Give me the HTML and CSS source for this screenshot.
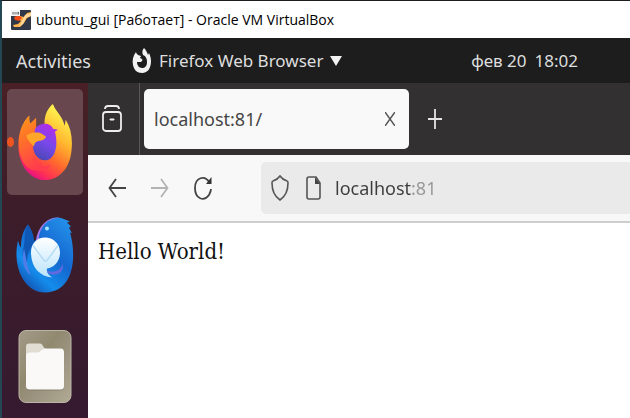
FILE: index.html
```
<!DOCTYPE html>
<html lang="en">
<head>
<meta charset="utf-8">
<title>ubuntu_gui [Работает] - Oracle VM VirtualBox</title>
<link rel="stylesheet" href="styles.css">
</head>
<body>
<header class="titlebar">
  <svg class="vm-icon" viewBox="0 0 20 20" aria-hidden="true">
    <rect width="20" height="20" rx="1" fill="#303747"/>
    <path d="M2 15l5-1 3-3-3-2 2-3 4 1 3-4 4-1v4l-4 2-3 5-4 4H3z" fill="#ffb44b"/>
    <path d="M3 7l5-2 3 3-3 3-4-1z" fill="#f04c18"/>
    <path d="M14 5l6-2v3l-5 2-3 6-4 3 3-6z" fill="#ffd79a"/>
    <rect x="0" y="0" width="9" height="6" fill="#f4f4f4"/>
    <path d="M2 2v2.500M4 2v2.500M6 2v2.500M7.500 2v2.500" stroke="#444" stroke-width=".8"/>
  </svg>
  <h1 class="title">ubuntu_gui [Работает] - Oracle VM VirtualBox</h1>
</header>
<div class="topbar">
  <button class="activities">Activities</button>
  <button class="app-menu">
    <svg class="app-icon" viewBox="0 0 20 26" aria-hidden="true">
      <path d="M4 4C1 8 0 12 1 17c1 5 4 8 9 8 6 0 9-5 9-12 0-3-1-6-2-8l-1 2c-1-3-2-5-4-7-2 2-2 5-1 7 3 1 4 4 4 7 0 4-2 6-5 6s-5-3-5-6h4c1-1 2-2 1-3L8 10l1-2-3-1C5 6 4 5 4 4z" fill="#f2f2f2"/>
    </svg>
    <span>Firefox Web Browser</span>
    <svg class="caret" viewBox="0 0 12 10" aria-hidden="true"><path d="M0 0h12L6 10z" fill="#f2f2f2"/></svg>
  </button>
  <time class="clock"><span>фев 20</span><span>18:02</span></time>
</div>
<div class="desktop">
  <nav class="dock" aria-label="Dock">
    <button class="dock-item active" aria-label="Firefox">
      <svg class="dock-icon" viewBox="0 0 54 78" aria-hidden="true">
        <defs>
          <linearGradient id="fire" x1=".8" y1="0" x2=".3" y2="1"><stop offset=".1" stop-color="#fff04d"/><stop offset=".4" stop-color="#ffb52e"/><stop offset=".65" stop-color="#ff6b2d"/><stop offset=".85" stop-color="#ff3350"/><stop offset="1" stop-color="#e50c8b"/></linearGradient>
          <linearGradient id="globe" x1=".7" y1="0" x2=".3" y2="1"><stop stop-color="#b52be6"/><stop offset=".5" stop-color="#7948eb"/><stop offset="1" stop-color="#4a47b5"/></linearGradient>
          <linearGradient id="head" x1="0" y1="0" x2=".4" y2="1"><stop stop-color="#ff9a16"/><stop offset=".5" stop-color="#ff6a2e"/><stop offset="1" stop-color="#ff3d4c"/></linearGradient>
        </defs>
        <path d="M27 26C25 13 29 5 35 0c3 8 9 11 12 22l1-6c5 8 7 18 6 29C53 64 42 77 27 77 12 77 0 62 0 42c0-13 4-23 11-30 0 4 0 6 1 8l6-5-1 9z" fill="url(#fire)"/>
        <path d="M11 12c0 4 0 6 1 8l6-6v12l9 5-9 6-3 20c4 6 12 8 18 4-2 5-8 8-14 6C7 69-1 52 1 34 3 24 6 16 11 12z" fill="url(#head)"/>
        <path d="M17 25C22 18 33 19 35 25l5 1-3 2c4 14 0 29-10 29-8 0-13-8-12-17z" fill="url(#globe)"/>
        <path d="M8 32c5-4 11-3 14-3l6 4c-1 4-5 4-9 5-2 1-3 2-3 5-4-3-7-7-8-11z" fill="#ffa62a"/>
      </svg>
    </button>
    <button class="dock-item" aria-label="Thunderbird">
      <svg class="dock-icon wide" viewBox="0 0 58 76" aria-hidden="true">
        <defs>
          <linearGradient id="bird" x1="1" y1="0" x2=".3" y2="1"><stop stop-color="#2798ef"/><stop offset=".5" stop-color="#1467cf"/><stop offset=".8" stop-color="#148ceb"/><stop offset="1" stop-color="#1357b7"/></linearGradient>
          <linearGradient id="mail" x2="0" y2="1"><stop stop-color="#fff"/><stop offset="1" stop-color="#b9e3fb"/></linearGradient>
        </defs>
        <path d="M2 24c1 3 1 5 3 7C5 21 7 14 12 8c3 5 5 9 6 17l2-2C25 4 38-3 49 3l5 2-3 1 4 4-2 1 3 6-2-1c7 24 4 60-25 60C8 76-4 50 2 24z" fill="url(#bird)"/>
        <path d="M12 8C7 17 10 24 7 33c-1 8 1 14 4 20-1-17 3-18 7-28 0-7-3-12-6-17z" fill="#1058b5"/>
        <path d="M20 24C22 9 32 0 44 1c-8 1-13 3-17 9-3 5-4 7-4 12z" fill="#a878ea"/>
        <path d="M29 53c8 5 16 1 18-6 1 10-7 13-14 10z" fill="#6269df"/>
        <path d="M8 32c-3 13 0 22 7 27-4-9-5-18-7-27z" fill="#4f7ee8"/>
        <path d="M15 36c0-9 6-15 14-15s15 6 15 15-6 15-13 16c-1 4 2 7 5 9-12-1-21-10-21-25z" fill="url(#mail)"/>
        <path d="M17 29l11 15c1 1 2 1 3 0l11-15" fill="none" stroke="#b4dcf6" stroke-width="1.500"/>
        <circle cx="31" cy="12" r="2" fill="#a8e5ff"/>
      </svg>
    </button>
    <button class="dock-item" aria-label="Files">
      <svg class="dock-icon" viewBox="0 0 54 74" aria-hidden="true">
        <defs><linearGradient id="case" x2="1" y2="1"><stop stop-color="#a39b88"/><stop offset=".4" stop-color="#91896f"/><stop offset=".6" stop-color="#9b937f"/><stop offset="1" stop-color="#b0a993"/></linearGradient></defs>
        <rect x="1" y="1" width="52" height="72" rx="7" fill="url(#case)" stroke="#bbb5a5"/>
        <path d="M8 17c0-2 1-3 3-3h11c3 0 3 5 6 5v12H8z" fill="#e1ddd2"/>
        <path d="M8 28c0-3 1-4 4-4h7c4 0 4-5 8-5h15c3 0 4 1 4 4v34c0 3-1 4-4 4H12c-3 0-4-1-4-4z" fill="#6f6958" opacity=".5"/>
        <path d="M8 27c0-3 1-4 4-4h7c4 0 4-4 8-4h15c3 0 4 1 4 4v33c0 3-1 4-4 4H12c-3 0-4-1-4-4z" fill="#faf9f7"/>
      </svg>
    </button>
  </nav>
  <main class="browser">
    <div class="tabstrip">
      <button class="recent" aria-label="Recent browsing">
        <svg viewBox="0 0 20 28" class="recent-icon" aria-hidden="true"><g fill="none" stroke="#ededed" stroke-width="1.800"><path d="M3 4q0-3 3-3h8q3 0 3 3"/><rect x="1" y="7" width="18" height="19" rx="3"/><path d="M8 14h4v1H8z" fill="#ededed" stroke-width="1"/></g></svg>
      </button>
      <div class="tab">
        <span class="tab-name">localhost:81/</span>
        <button class="close" aria-label="Close tab"><svg class="close-icon" viewBox="0 0 10 14" aria-hidden="true"><path d="M0 0l10 14M10 0L0 14" stroke="#555" stroke-width="1.500"/></svg></button>
      </div>
      <button class="new-tab" aria-label="New tab"><svg class="plus-icon" viewBox="0 0 14 20" aria-hidden="true"><path d="M7 0v20M0 10h14" stroke="#e4e4e4" stroke-width="1.800"/></svg></button>
    </div>
    <div class="toolbar">
      <button class="tool" aria-label="Back"><svg class="tool-icon" viewBox="0 0 18 24" aria-hidden="true"><path d="M8 3L1.500 12 8 21M1 12h17" fill="none" stroke="#444" stroke-width="1.800"/></svg></button>
      <button class="tool" aria-label="Forward" disabled><svg class="tool-icon" viewBox="0 0 18 24" aria-hidden="true"><path d="M10 3l6.500 9L10 21M17 12H0" fill="none" stroke="#b4b4b4" stroke-width="1.800"/></svg></button>
      <button class="tool" aria-label="Reload"><svg class="tool-icon" viewBox="0 0 18 24" aria-hidden="true"><path d="M15 6C11-1 1 1 1 12s9 14 14 7c1-2 2-4 2-6" fill="none" stroke="#444" stroke-width="1.800"/><path d="M17.500 1v7H12z" fill="#333"/></svg></button>
      <div class="urlbar">
        <svg class="shield" viewBox="0 0 18 26" aria-hidden="true"><path d="M9 1c2 3 4 4 7 5q1 0 1 2c0 7-2 13-8 17C3 21 1 15 1 8q0-2 1-2c3-1 5-2 7-5z" fill="none" stroke="#555" stroke-width="1.600"/></svg>
        <svg class="page-icon" viewBox="0 0 15 24" aria-hidden="true"><path d="M3 1h7l4 6v14q0 2-2 2H3q-2 0-2-2V3q0-2 2-2z" fill="none" stroke="#555" stroke-width="1.600"/><path d="M9 1l5 7H9z" fill="#444"/></svg>
        <input class="address" type="text" aria-label="Address" value="localhost:81">
      </div>
    </div>
    <article class="page">Hello World!</article>
  </main>
</div>
</body>
</html>
```
FILE: styles.css
```
* { box-sizing: border-box; }
body {
  margin: 0;
  min-height: 100vh;
  display: flex;
  flex-direction: column;
  overflow: hidden;
  border-top: 1px solid #1c1b20;
  border-left: 2px solid #234853;
  background: #fff;
  font-family: "Noto Sans", "Open Sans", sans-serif;
  font-size: 18px;
}
button {
  display: flex;
  align-items: center;
  justify-content: center;
  padding: 0;
  border: 0;
  background: none;
  color: inherit;
  font: inherit;
}
svg { display: block; flex: none; }
.titlebar {
  display: flex;
  align-items: center;
  gap: 5px;
  height: 37px;
  padding: 0 9px;
}
.vm-icon { width: 20px; height: 20px; }
.title {
  margin: 0;
  color: #000;
  font: 400 14px/20px "Open Sans", sans-serif;
  white-space: nowrap;
}
.topbar {
  display: flex;
  align-items: center;
  height: 45px;
  padding: 0 52px 0 14px;
  background: #1d1d1d;
  color: #dedede;
  font-size: 17px;
  white-space: nowrap;
}
.activities { font-size: 18px; }
.app-menu { gap: 7px; margin-left: 41px; }
.app-icon { width: 20px; height: 26px; }
.caret { width: 12px; height: 10px; }
.clock { display: flex; gap: 8px; margin-left: auto; }
.desktop { display: flex; flex: 1; }
.dock {
  display: flex;
  flex-direction: column;
  gap: 6px;
  width: 86px;
  padding: 6px 5px 0;
  background: linear-gradient(#492025, #3d1d29 35%, #351a30);
}
.dock-item {
  position: relative;
  height: 106px;
  border-radius: 5px;
}
.dock-item.active { background: #68484e; }
.dock-item.active::before {
  content: "";
  position: absolute;
  left: 0;
  top: 48px;
  width: 7px;
  height: 10px;
  border-radius: 50%;
  background: #ed5420;
}
.dock-icon { width: 54px; height: 77px; }
.dock-icon.wide { width: 58px; }
.browser { display: flex; flex: 1; flex-direction: column; min-width: 0; }
.tabstrip {
  display: flex;
  align-items: center;
  height: 72px;
  background: #323031;
}
.recent {
  width: 52px;
  height: 100%;
  padding-right: 3px;
  border-right: 1px solid #5b5959;
}
.recent-icon { width: 20px; height: 28px; }
.tab {
  display: flex;
  align-items: center;
  justify-content: space-between;
  width: 265px;
  height: 60px;
  margin-left: 4px;
  padding: 0 14px 0 10px;
  border-radius: 5px;
  background: #f9f9f9;
  color: #464646;
}
.close-icon { width: 10px; height: 14px; }
.new-tab { width: 52px; height: 60px; }
.plus-icon { width: 14px; height: 20px; }
.toolbar {
  display: flex;
  align-items: center;
  height: 68px;
  padding-left: 7px;
  border-bottom: 2px solid #cecece;
  background: #f8f8f8;
}
.tool { width: 43px; height: 52px; }
.tool-icon { width: 18px; height: 24px; }
.urlbar {
  display: flex;
  flex: 1;
  align-items: center;
  min-width: 0;
  height: 52px;
  margin-left: 37px;
  padding-left: 10px;
  border-radius: 5px 0 0 5px;
  background: #eaeaea;
}
.shield { width: 18px; height: 26px; }
.page-icon { width: 15px; height: 24px; margin: 0 14px 0 17px; }
.address {
  flex: 1;
  min-width: 0;
  padding: 0;
  border: 0;
  outline: 0;
  background: linear-gradient(to right, #3c3c3c 77px, #969696 77px);
  -webkit-background-clip: text;
  background-clip: text;
  color: transparent;
  font: inherit;
}
.page {
  padding: 13px 10px;
  color: #111;
  font: 22px/32px "DejaVu Serif Condensed", "DejaVu Serif", serif;
}
```
